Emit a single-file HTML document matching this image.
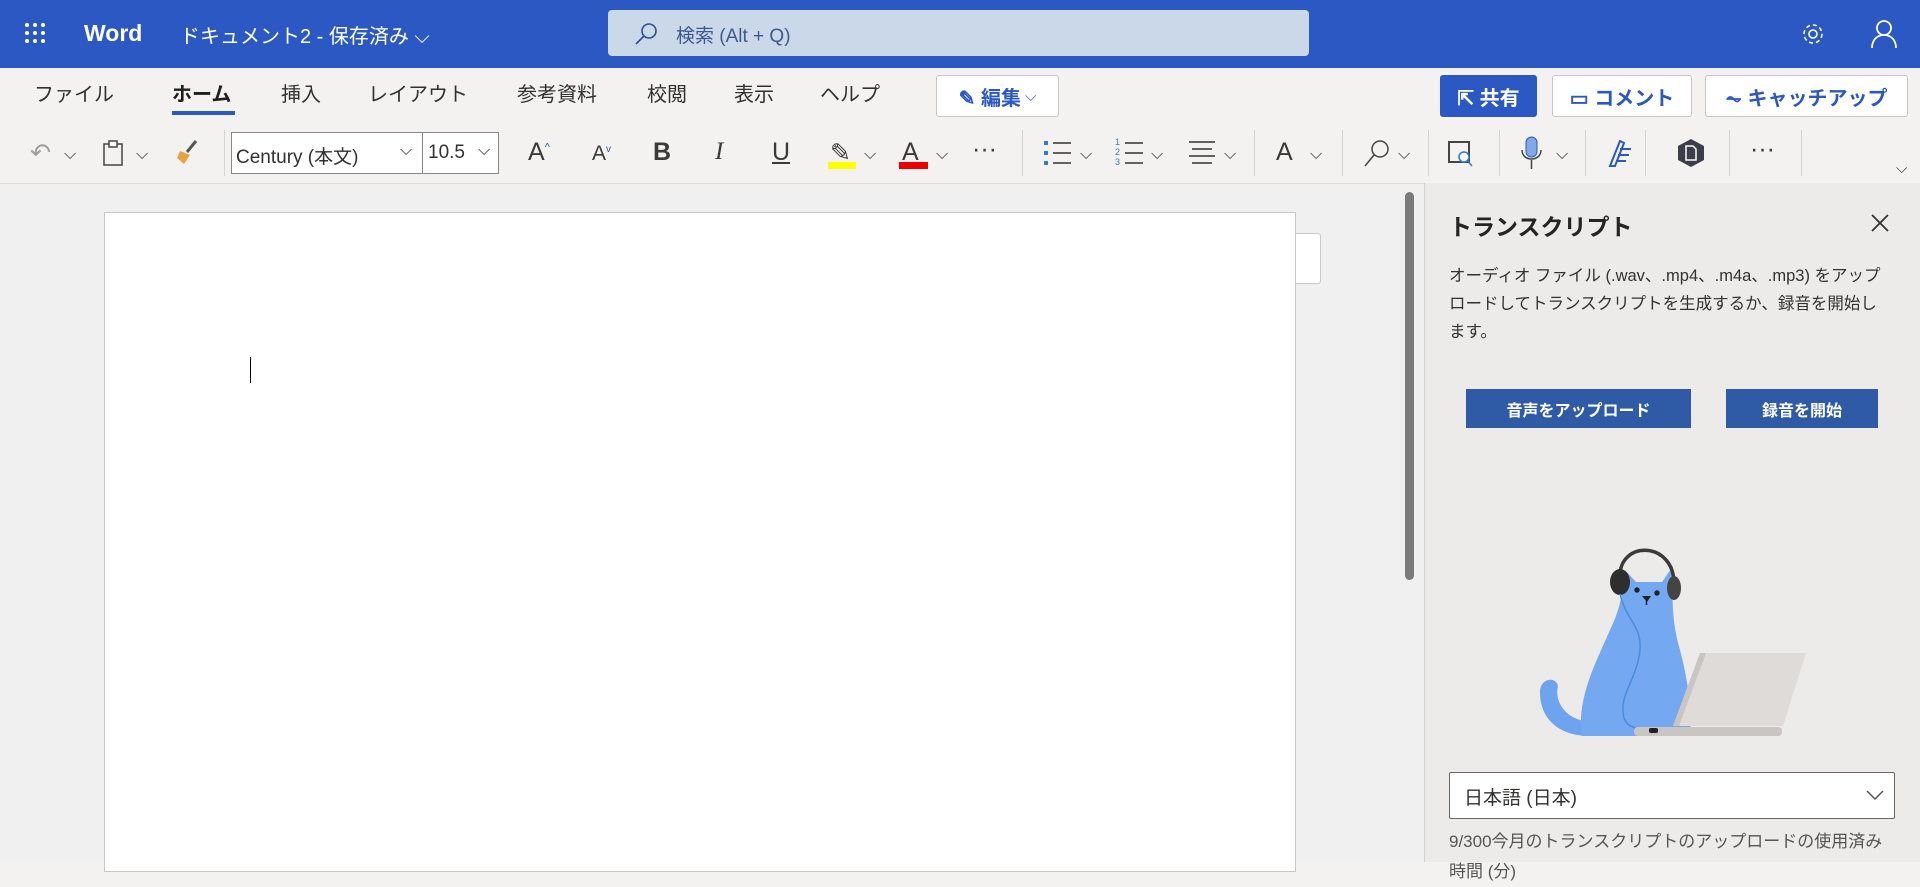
<!DOCTYPE html>
<html><head><meta charset="utf-8"><style>
*{margin:0;padding:0;box-sizing:border-box}
body{width:1920px;height:862px;overflow:hidden;background:#f3f2f1;font-family:"Liberation Sans","Noto Sans CJK JP",sans-serif;position:relative;color:#323130}
.a{position:absolute}
.top{left:0;top:0;width:1920px;height:68px;background:#2b58c2}
.tab{position:absolute;top:78px;font-size:20px;color:#323130}
.sep{position:absolute;top:130px;width:1px;height:46px;background:#d6d4d2}
.chev{position:absolute;top:146px}
.btn{position:absolute;top:75px;height:42px;border:1px solid #c8c6c4;border-radius:3px;background:#fff;font-size:20px;font-weight:bold;color:#2b58c2;display:flex;align-items:center;justify-content:center;gap:4px}
.tb{position:absolute;font-size:25px;color:#3b3a39;top:138px}
</style></head><body>
<div class="a top"></div>
<svg class="a" style="left:24px;top:22px" width="22" height="22"><g fill="#fff"><circle cx="3" cy="3" r="2"/><circle cx="11" cy="3" r="2"/><circle cx="19" cy="3" r="2"/><circle cx="3" cy="11" r="2"/><circle cx="11" cy="11" r="2"/><circle cx="19" cy="11" r="2"/><circle cx="3" cy="19" r="2"/><circle cx="11" cy="19" r="2"/><circle cx="19" cy="19" r="2"/></g></svg>
<div class="a" style="left:84px;top:20px;font-size:23px;font-weight:bold;color:#fff">Word</div>
<div class="a" style="left:180px;top:20px;font-size:20px;color:#fff">ドキュメント2 - 保存済み ⌵</div>
<div class="a" style="left:608px;top:10px;width:701px;height:46px;background:#cbd8ea;border-radius:4px"></div>
<svg class="a" style="left:634px;top:22px" width="24" height="24"><circle cx="15" cy="9" r="7" fill="none" stroke="#2b4f8f" stroke-width="1.6"/><path d="M10 14 L2 22" stroke="#2b4f8f" stroke-width="1.6"/></svg>
<div class="a" style="left:676px;top:21px;font-size:19px;color:#3d5a8c">検索 (Alt + Q)</div>
<svg class="a" style="left:1800px;top:21px" width="26" height="26" viewBox="0 0 26 26"><circle cx="13" cy="13" r="4" fill="none" stroke="#fff" stroke-width="1.6"/><circle cx="13" cy="13" r="9" fill="none" stroke="#fff" stroke-width="1.6" stroke-dasharray="4 3"/></svg>
<svg class="a" style="left:1870px;top:19px" width="28" height="30"><circle cx="14" cy="9" r="7" fill="none" stroke="#fff" stroke-width="1.8"/><path d="M2 29 C2 20 8 16 14 16 C20 16 26 20 26 29" fill="none" stroke="#fff" stroke-width="1.8"/></svg>

<div class="tab" style="left:34px">ファイル</div>
<div class="tab" style="left:172px;font-weight:bold;color:#201f1e">ホーム</div>
<div class="a" style="left:172px;top:111px;width:63px;height:4px;background:#2b58c2"></div>
<div class="tab" style="left:281px">挿入</div>
<div class="tab" style="left:368px">レイアウト</div>
<div class="tab" style="left:517px">参考資料</div>
<div class="tab" style="left:647px">校閲</div>
<div class="tab" style="left:734px">表示</div>
<div class="tab" style="left:820px">ヘルプ</div>
<div class="btn" style="left:936px;width:123px">✎ 編集 <span style="font-weight:normal;font-size:15px">⌵</span></div>
<div class="btn" style="left:1440px;width:97px;background:#2b58c2;border-color:#2b58c2;color:#fff">⇱ 共有</div>
<div class="btn" style="left:1552px;width:140px">▭ コメント</div>
<div class="btn" style="left:1705px;width:203px">⏦ キャッチアップ</div>

<div class="tb" style="left:30px;color:#a19f9d">↶</div><div class="chev" style="left:64px">⌵</div>
<svg class="a" style="left:102px;top:139px" width="22" height="28"><rect x="2" y="5" width="18" height="21" fill="none" stroke="#444" stroke-width="1.5"/><rect x="7" y="2" width="8" height="6" fill="#fff" stroke="#444" stroke-width="1.5"/></svg><div class="chev" style="left:136px">⌵</div>
<svg class="a" style="left:174px;top:138px" width="26" height="28"><path d="M22 3 L13 14" stroke="#555" stroke-width="3"/><path d="M6 13 L16 17 L10 26 L3 20Z" fill="#e8a33c"/></svg>
<div class="sep" style="left:224px"></div>
<div class="a" style="left:231px;top:132px;width:268px;height:42px;background:#fff;border:1px solid #8a8886"></div>
<div class="a" style="left:422px;top:132px;width:1px;height:42px;background:#8a8886"></div>
<div class="a" style="left:236px;top:142px;font-size:19px">Century (本文)</div><div class="a" style="left:400px;top:142px;font-size:16px">⌵</div>
<div class="a" style="left:428px;top:142px;font-size:19px">10.5</div><div class="a" style="left:478px;top:142px;font-size:16px">⌵</div>
<div class="tb" style="left:528px">A<sup style="font-size:11px;color:#2b58c2">^</sup></div>
<div class="tb" style="left:592px;font-size:21px;top:142px">A<sup style="font-size:10px;color:#2b58c2">v</sup></div>
<div class="tb" style="left:653px;font-weight:bold">B</div>
<div class="tb" style="left:715px;font-family:'Liberation Serif',serif;font-style:italic">I</div>
<div class="tb" style="left:772px;text-decoration:underline">U</div>
<div class="tb" style="left:830px">✎</div><div class="a" style="left:828px;top:162px;width:28px;height:7px;background:#ffff00"></div><div class="chev" style="left:864px">⌵</div>
<div class="tb" style="left:902px">A</div><div class="a" style="left:899px;top:162px;width:29px;height:7px;background:#e00"></div><div class="chev" style="left:936px">⌵</div>
<div class="tb" style="left:972px;top:135px">···</div>
<div class="sep" style="left:1022px"></div>
<svg class="a" style="left:1043px;top:139px" width="30" height="28"><g fill="#2b7cd3"><rect x="1" y="2" width="4" height="4"/><rect x="1" y="12" width="4" height="4"/><rect x="1" y="22" width="4" height="4"/></g><g stroke="#333" stroke-width="1.6"><path d="M10 4H28M10 14H28M10 24H28"/></g></svg><div class="chev" style="left:1080px">⌵</div>
<svg class="a" style="left:1115px;top:137px" width="30" height="30"><g fill="#2b7cd3" font-size="9" font-family="Liberation Sans"><text x="0" y="8">1</text><text x="0" y="18">2</text><text x="0" y="28">3</text></g><g stroke="#333" stroke-width="1.6"><path d="M10 6H28M10 16H28M10 26H28"/></g></svg><div class="chev" style="left:1151px">⌵</div>
<svg class="a" style="left:1187px;top:139px" width="30" height="28"><g stroke="#333" stroke-width="1.6"><path d="M2 3H28M5 10H25M2 17H28M5 24H25"/></g></svg><div class="chev" style="left:1224px">⌵</div>
<div class="sep" style="left:1254px"></div>
<div class="tb" style="left:1276px">A</div><div class="chev" style="left:1310px">⌵</div>
<div class="sep" style="left:1342px"></div>
<svg class="a" style="left:1362px;top:138px" width="30" height="30"><circle cx="18" cy="11" r="8" fill="none" stroke="#444" stroke-width="1.5"/><path d="M12 17 L3 28" stroke="#444" stroke-width="1.5"/></svg><div class="chev" style="left:1398px">⌵</div>
<div class="sep" style="left:1428px"></div>
<svg class="a" style="left:1447px;top:140px" width="28" height="28"><rect x="2" y="2" width="20" height="20" fill="none" stroke="#444" stroke-width="2"/><circle cx="17" cy="17" r="5" fill="#fff" stroke="#2b7cd3" stroke-width="1.5"/><path d="M20 20 L25 26" stroke="#2b7cd3" stroke-width="1.5"/></svg>
<div class="sep" style="left:1499px"></div>
<svg class="a" style="left:1520px;top:136px" width="24" height="34"><rect x="6" y="1" width="11" height="20" rx="5.5" fill="#7fa9e8" stroke="#2b58c2"/><path d="M2 14 C2 26 21 26 21 14 M11.5 24 V33" fill="none" stroke="#444" stroke-width="1.5"/></svg><div class="chev" style="left:1556px">⌵</div>
<div class="sep" style="left:1585px"></div>
<svg class="a" style="left:1606px;top:138px" width="28" height="30"><path d="M4 28 L14 3 L18 5 L9 28Z M14 11 H25 M12 17 H23 M10 23 H20" fill="none" stroke="#2b58c2" stroke-width="2"/></svg>
<div class="sep" style="left:1645px"></div>
<svg class="a" style="left:1677px;top:138px" width="28" height="30"><path d="M14 1 L27 8 V22 L14 29 L1 22 V8Z" fill="#3b3d4a"/><path d="M9 8 H16 L19 11 V22 H9Z" fill="none" stroke="#fff" stroke-width="1.5"/></svg>
<div class="sep" style="left:1729px"></div>
<div class="tb" style="left:1750px;top:135px">···</div>
<div class="sep" style="left:1801px"></div>
<div class="a" style="left:1896px;top:160px;font-size:15px">⌵</div>

<div class="a" style="left:0;top:183px;width:1424px;height:679px;background:#f0f0f0;border-top:1px solid #dcdcdc"></div>
<div class="a" style="left:104px;top:212px;width:1192px;height:660px;background:#fff;border:1px solid #c8c8c8"></div>
<div class="a" style="left:1295px;top:233px;width:26px;height:51px;background:#fff;border:1px solid #c8c8c8;border-radius:0 3px 3px 0"></div>
<div class="a" style="left:250px;top:357px;width:1px;height:26px;background:#000"></div>
<div class="a" style="left:1405px;top:192px;width:9px;height:388px;background:#7a7a7a;border-radius:5px"></div>

<div class="a" style="left:1424px;top:183px;width:496px;height:679px;background:#edebe9;border-left:1px solid #d2d0ce"></div>
<div class="a" style="left:1449px;top:208px;font-size:23px;font-weight:bold;color:#252423">トランスクリプト</div>
<svg class="a" style="left:1871px;top:214px" width="18" height="18"><path d="M1 1L17 17M17 1L1 17" stroke="#333" stroke-width="1.8"/></svg>
<div class="a" style="left:1449px;top:262px;width:438px;font-size:16.5px;line-height:28px;color:#323130">オーディオ ファイル (.wav、.mp4、.m4a、.mp3) をアップロードしてトランスクリプトを生成するか、録音を開始します。</div>
<div class="a" style="left:1466px;top:389px;width:225px;height:39px;background:#2e5aa6;color:#fff;font-size:16px;font-weight:bold;display:flex;align-items:center;justify-content:center">音声をアップロード</div>
<div class="a" style="left:1726px;top:389px;width:152px;height:39px;background:#2e5aa6;color:#fff;font-size:16px;font-weight:bold;display:flex;align-items:center;justify-content:center">録音を開始</div>
<svg class="a" style="left:1520px;top:530px" width="300" height="220" viewBox="0 0 300 220">
<path d="M70 206 C40 206 20 190 20 162 C20 148 36 146 38 156 C34 172 46 190 70 192Z" fill="#6ea3ee"/>
<path d="M62 206 C56 170 76 132 90 100 C100 80 103 62 105 40 L116 52 L142 52 L153 36 C153 60 150 86 160 120 C168 150 172 180 170 206Z" fill="#74a8f0"/>
<circle cx="117" cy="60" r="2.7" fill="#222"/><circle cx="137" cy="63" r="2.7" fill="#222"/><path d="M122 66 H131 L127 72Z" fill="#222"/><path d="M126.5 70 V75" stroke="#222" stroke-width="1.5"/>
<path d="M100 48 C98 10 155 10 154 55" fill="none" stroke="#3a3a3a" stroke-width="3.5"/>
<ellipse cx="100" cy="52" rx="10" ry="13" fill="#2e2e2e"/><ellipse cx="154" cy="58" rx="7" ry="12" fill="#444"/>
<path d="M100 64 C106 90 122 96 120 120 C117 150 98 165 104 188 C108 200 122 199 134 200" fill="none" stroke="#4a8be0" stroke-width="1.5"/>
<path d="M153 196 L180 123 H286 L263 196Z" fill="#dedbd8"/>
<path d="M153 196 L180 123 L186 123 L159 196Z" fill="#c8c5c2"/>
<rect x="114" y="197" width="148" height="9" rx="4" fill="#c8c5c2"/>
<rect x="129" y="198" width="9" height="5" rx="2" fill="#222"/>
</svg>
<div class="a" style="left:1449px;top:772px;width:446px;height:47px;background:#fff;border:1px solid #666;border-radius:2px"></div>
<div class="a" style="left:1464px;top:783px;font-size:19px;color:#323130">日本語 (日本)</div>
<svg class="a" style="left:1866px;top:789px" width="18" height="12"><path d="M1 2 L9 10 L17 2" fill="none" stroke="#555" stroke-width="1.5"/></svg>
<div class="a" style="left:1449px;top:827px;width:440px;font-size:17px;line-height:30px;color:#555">9/300今月のトランスクリプトのアップロードの使用済み時間 (分)</div>
</body></html>
